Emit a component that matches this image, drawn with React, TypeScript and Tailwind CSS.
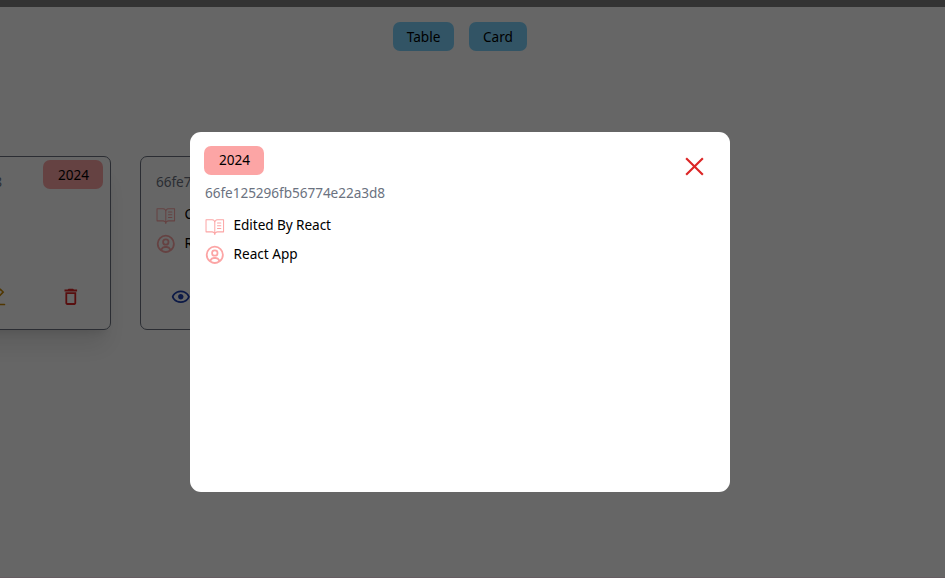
import React from "react";
import { PiBookOpenTextLight } from "react-icons/pi";
import { BiUserCircle, BiShow } from "react-icons/bi";
import { AiOutlineClose, AiOutlineEdit } from "react-icons/ai";
import { MdOutlineDelete } from "react-icons/md";
import { BsInfoCircle } from "react-icons/bs";

type Book = { id: string; title: string; author: string; year: number };

const selected: Book = { id: "66fe125296fb56774e22a3d8", title: "Edited By React", author: "React App", year: 2024 };
const books: Book[] = [
  selected,
  { id: "66fe7a5296fb56774e22a3e1", title: "Clean Code", author: "Robert Martin", year: 2024 },
];

function Details({ book }: { book: Book }) {
  return (
    <>
      <h4 className="h-[22px] pl-px leading-[22px] tracking-[-0.05px] text-[#6b7280]">{book.id}</h4>
      <div className="mt-[7px] flex h-[29px] items-center gap-x-[7px]">
        <PiBookOpenTextLight className="size-[21.6px] shrink-0 text-[#fca5a5]" />
        <span className="whitespace-nowrap pl-px tracking-[-0.07px]">{book.title}</span>
      </div>
      <div className="flex h-[29px] items-center gap-x-[7px]">
        <BiUserCircle className="size-[21.6px] shrink-0 text-[#fca5a5]" />
        <span className="whitespace-nowrap pl-px">{book.author}</span>
      </div>
    </>
  );
}

function Year({ value }: { value: number }) {
  return (
    <span className="flex h-[29px] w-[60px] items-center justify-center rounded-[7px] bg-[#fca5a5] pl-px">{value}</span>
  );
}

function BookCard({ book }: { book: Book }) {
  return (
    <div className="relative h-[174px] w-[305px] shrink-0 rounded-[7px] border border-[#6b7280] px-[14px] pt-[14px] first:shadow-xl">
      <div className="absolute right-[7px] top-[3px] leading-[22px]">
        <Year value={book.year} />
      </div>
      <Details book={book} />
      <div className="mt-[28px] flex items-center justify-between pl-[15px] pr-[14px]">
        <BiShow className="size-[21.6px] text-[#1e40af]" />
        <BsInfoCircle className="size-[21.6px] text-[#166534]" />
        <AiOutlineEdit className="size-[21.6px] text-[#ca8a04]" />
        <MdOutlineDelete className="size-[21.6px] text-[#dc2626]" />
      </div>
    </div>
  );
}

function Modal({ book }: { book: Book }) {
  return (
    <div className="fixed inset-0 z-10 flex items-start justify-center bg-black/60 pr-[25px] pt-[132px]">
      <div className="relative h-[360px] w-[540px] rounded-[11px] bg-white p-[14px]">
        <button className="absolute right-[22px] top-[21px]" aria-label="Close">
          <AiOutlineClose className="size-[27px] text-[#dc2626]" />
        </button>
        <Year value={book.year} />
        <div className="mt-[7px]">
          <Details book={book} />
        </div>
      </div>
    </div>
  );
}

export default function App() {
  return (
    <div className="flex h-[578px] flex-col overflow-hidden border-b border-pink-100 bg-white font-['Noto_Sans',sans-serif] text-[13.6px] text-black">
      <div className="h-[7px] shrink-0 bg-[#808080]" />
      <div className="mt-[15px] flex justify-center gap-[15px] pr-[25px]">
        <button className="h-[29px] w-[61px] rounded-[7px] bg-[#7dd3fc] pt-[2px]">Table</button>
        <button className="h-[29px] w-[58px] rounded-[7px] bg-[#7dd3fc] pt-[2px]">Card</button>
      </div>
      <div className="-ml-[194px] mt-[105px] flex gap-[29px]">
        {books.map((book) => (
          <BookCard key={book.id} book={book} />
        ))}
      </div>
      <Modal book={selected} />
    </div>
  );
}
